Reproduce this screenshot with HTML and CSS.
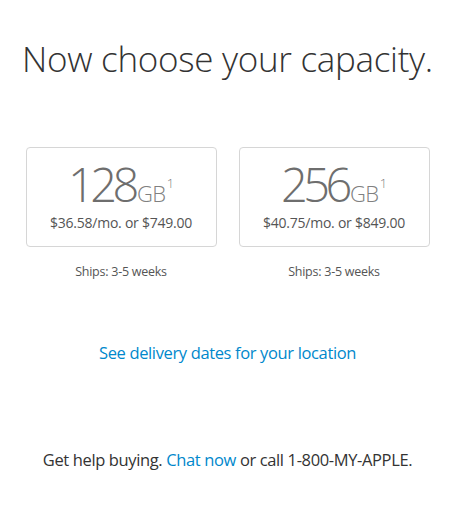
FILE: index.html
```html
<!DOCTYPE html>
<html>
<head>
<meta charset="utf-8">
<link rel="stylesheet" href="styles.css">
</head>
<body>
<main class="page">
  <h1 class="title">Now choose your capacity.</h1>
  <div class="options">
    <div class="option">
      <div class="card">
        <div class="size"><span class="num">128</span><span class="unit">GB</span><span class="fn">1</span></div>
        <div class="price">$36.58/mo. or $749.00</div>
      </div>
      <div class="ships">Ships: 3-5 weeks</div>
    </div>
    <div class="option">
      <div class="card">
        <div class="size"><span class="num">256</span><span class="unit">GB</span><span class="fn">1</span></div>
        <div class="price">$40.75/mo. or $849.00</div>
      </div>
      <div class="ships">Ships: 3-5 weeks</div>
    </div>
  </div>
  <a class="delivery" href="#">See delivery dates for your location</a>
  <p class="help">Get help buying. <a href="#">Chat now</a> or call 1-800-MY-APPLE.</p>
</main>
</body>
</html>
```
FILE: styles.css
```css
* { box-sizing: border-box; }
html, body { margin: 0; padding: 0; background: #fff; }
body { font-family: "Open Sans", "DejaVu Sans", sans-serif; color: #333; }
.page { display: flex; flex-direction: column; align-items: center; width: 455px; }
.title {
  margin: 35px 0 0;
  font-size: 35px;
  font-weight: 300;
  line-height: 48px;
  color: #333;
  letter-spacing: -0.3px;
}
.options { display: flex; gap: 22px; margin-top: 64px; }
.option { display: flex; flex-direction: column; align-items: center; }
.card {
  width: 191px; height: 100px;
  border: 1px solid #d6d6d6; border-radius: 4px;
  display: flex; flex-direction: column; align-items: center;
  padding-top: 12px;
}
.size { color: #6e6e6e; line-height: 48px; height: 48px; white-space: nowrap; }
.num { font-size: 47px; font-weight: 300; letter-spacing: -4.5px; margin-right: 2px; }
.unit { font-size: 22px; font-weight: 300; letter-spacing: -0.5px; color: #808080; }
.fn { font-size: 13px; font-weight: 300; vertical-align: 14px; line-height: 0; margin-left: 1px; color: #808080; }
.price { font-size: 14px; color: #555; margin-top: 5px; line-height: 20px; letter-spacing: -0.24px; }
.ships { font-size: 12.5px; color: #555; margin-top: 16px; line-height: 18px; letter-spacing: -0.25px; }
.delivery {
  margin-top: 60px; font-size: 16.5px; color: #0088cc; text-decoration: none; line-height: 24px; letter-spacing: -0.36px;
}
.help { margin: 83px 0 0; font-size: 16.5px; line-height: 24px; color: #333; letter-spacing: -0.37px; }
.help a { color: #0088cc; text-decoration: none; }
```
